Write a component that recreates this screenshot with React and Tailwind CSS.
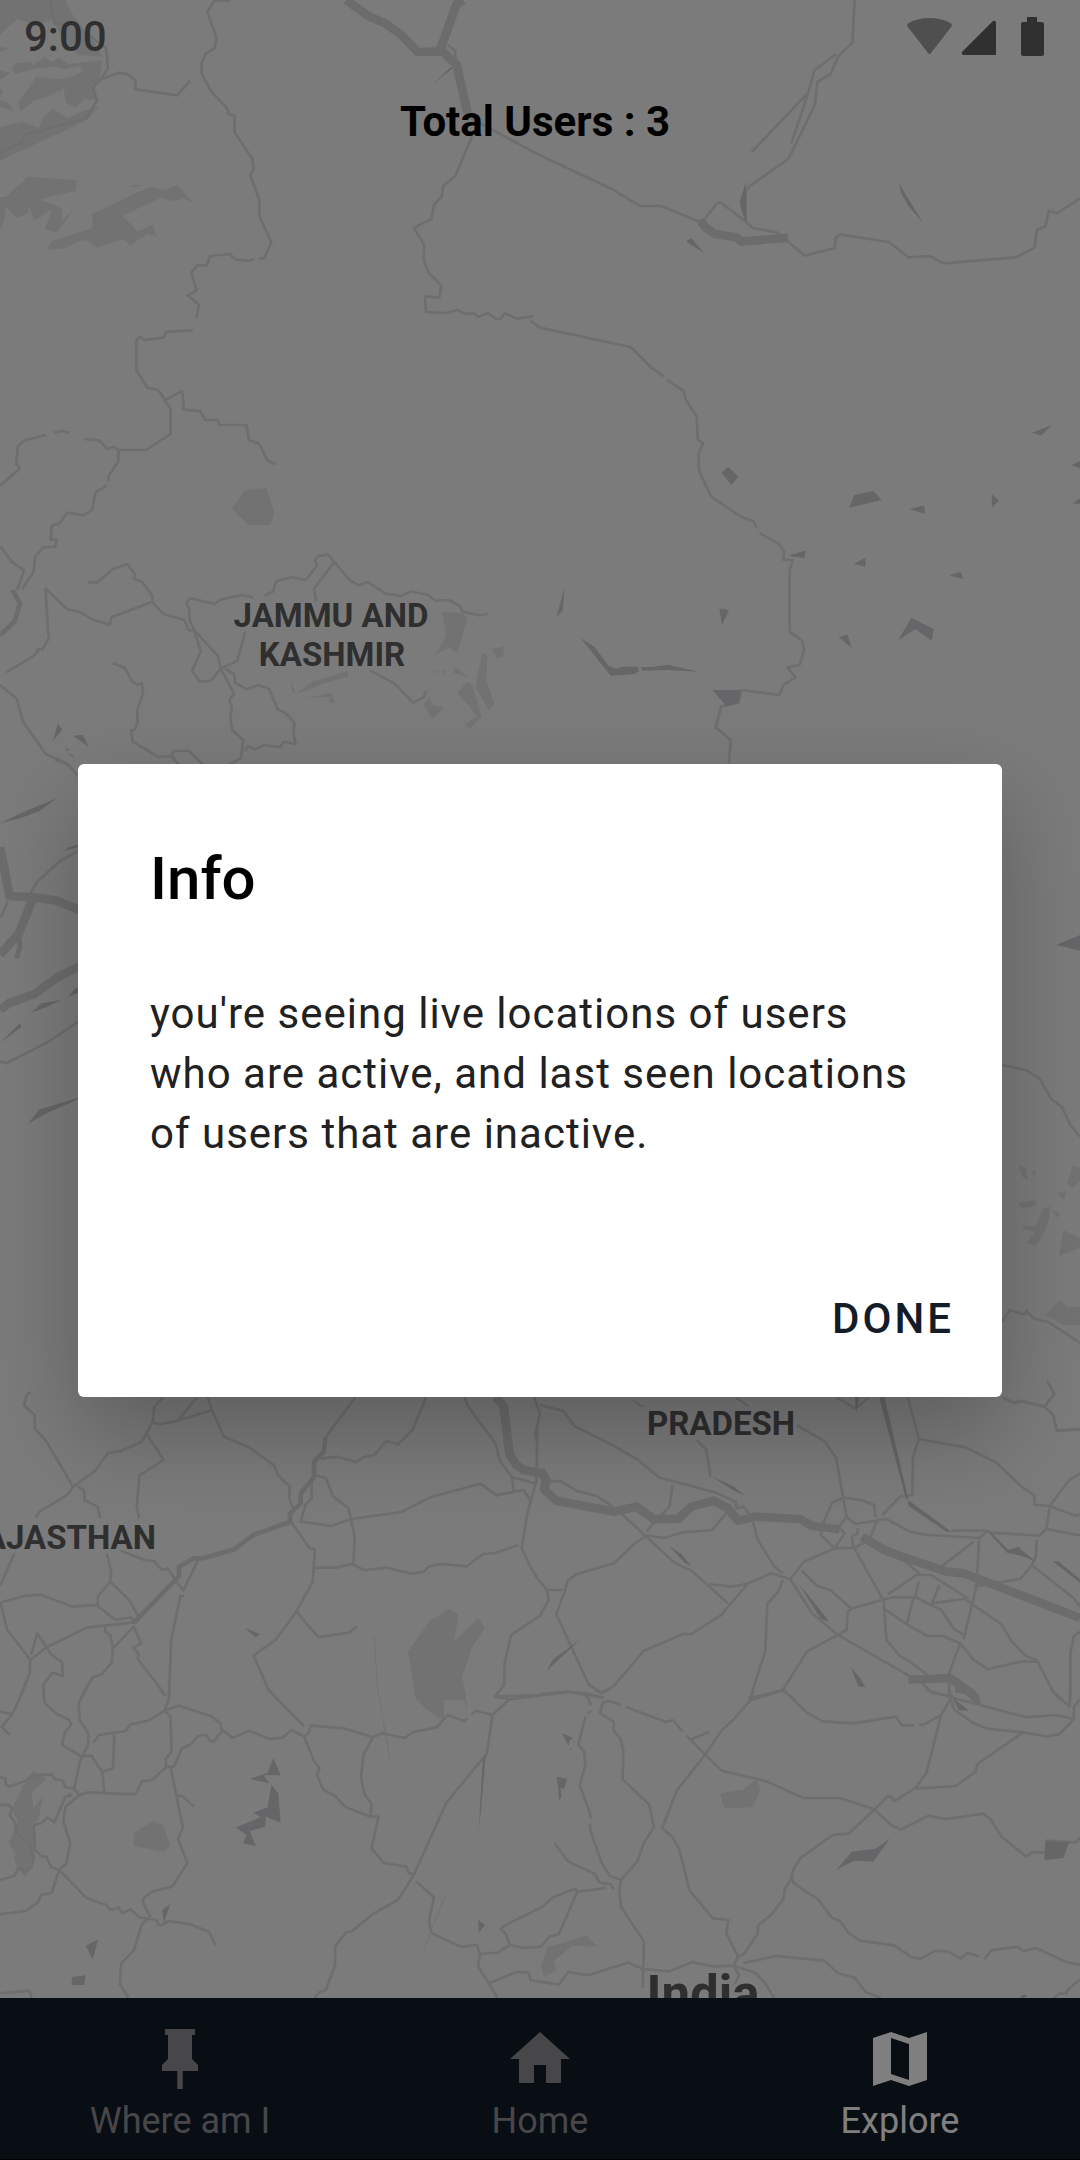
import React from "react";

/* Map artwork, split into sheets. Each sheet has its own origin. */
const sheets = [
  {
    at: [0, 0],
    land: [
      "M0 0H190L205 35L245 90L270 120L298 170L230 165L200 140L150 60L100 75L50 57L0 105Z",
      "M33 208L45 190L85 185L98 195L130 170L150 185L172 173L200 192L298 180L290 232L270 262L283 300L245 298L222 322L192 310L184 262L150 315L175 270L140 290L98 302L60 335L53 310L105 230L175 238L218 228L245 210L232 198L190 208L150 200L110 205L70 215L45 222Z",
      "M0 140L30 145L0 155Z M0 212L30 218L0 240Z M0 262L10 275L0 295Z M0 300L20 305L42 335L0 320Z",
      "M0 380L70 365L112 385L130 345L155 327L195 355L235 335L290 318L250 362L0 482Z",
      "M0 592L18 590L80 530L222 540L222 572L115 598L180 625L178 665L215 625L166 698L130 688L152 628L98 662L85 615L82 640L50 655L18 620L12 665L0 690Z",
      "M268 642L435 560L475 570L515 556L562 610L535 596L498 604L470 592L355 648L400 694L443 675L456 712L430 702L378 736L358 718L283 742L248 720L218 728L190 745L136 750L150 724L268 684Z",
      "M376 562L390 553L416 557Z",
    ],
    dark: ["M1205 303L1310 200L1316 204L1250 258Z"],
    thick: ["M1005 0L1070 48L1118 70L1165 104L1213 156L1285 154L1326 195L1358 340M1278 150L1325 14L1345 0"],
    thin: [
      "M147 0L158 70L210 72M262 108L308 145L314 205L292 238L270 262L282 302L272 318L250 355L68 406L66 425L0 460M292 238L345 218L370 222L393 240V268L515 286L552 243",
      "M670 2H622L602 36L629 115L623 145L598 160L585 190V220L612 272L660 326L664 342L681 347V397L733 477L736 508L727 525L753 600V648L788 727L767 775H752M740 776L722 782L684 779L667 762L610 768L600 796H573L555 818L571 871L545 886L577 914L571 956M560 991L484 995L474 1013L418 1020L407 1010L396 1020V1110L428 1164L458 1169L480 1200L529 1173L532 1200",
      "M1300 135L1322 153V190M1358 350L1568 466M1376 395L1322 528L1287 557L1282 590L1260 615L1253 656L1202 684L1232 735L1230 780L1244 818L1281 856L1276 892L1234 889L1237 936L1298 939L1328 930L1350 942L1378 940L1388 951L1416 939L1440 957H1453L1466 940L1502 956L1548 949M1540 962L1568 983",
    ],
  },
  {
    at: [540, 0],
    land: [],
    dark: [
      "M1042 548L1054 570L1112 668L1070 618L1048 578Z",
      "M424 724L440 714L476 760Z",
      "M598 545V665L588 640L580 605Z",
    ],
    thick: ["M466 662L480 682L508 702L570 712L585 725L720 714"],
    thin: [
      "M914 0L907 128L865 170L844 222L805 246L798 315L722 476L607 560L597 577V665L524 607L512 612L478 658L460 664L352 618H290L210 568L0 466M597 665L618 684L690 698L768 767L856 744L859 712L872 704L1013 726L1070 772L1132 768L1172 790L1382 772L1436 743L1443 690L1468 679L1477 632L1502 640L1568 595",
      "M860 162L797 210L779 277L614 457M779 277L730 430M0 983L263 1041L324 1104L360 1130M370 1140L418 1174L423 1200",
    ],
  },
  {
    at: [0, 400],
    land: [
      "M673 325L712 270L773 264L797 338L785 375H722Z",
      "M1283 635L1345 640L1357 655L1328 760L1306 742L1262 765L1296 708Z",
      "M1400 758L1416 768L1412 840L1435 910L1420 932L1380 862Z",
      "M1328 880L1356 845L1372 855L1398 950L1365 985L1350 975L1386 948Z",
      "M1230 915L1245 893L1260 918L1292 920L1256 956Z",
      "M1427 748L1462 738V770L1442 775Z",
      "M862 880L905 845L1010 812V830L935 852L895 870Z M885 895L962 878L972 910L955 908L960 890Z M842 835L858 880L850 878Z",
      "M1318 800L1362 830L1316 818Z M1285 812L1298 810L1290 825Z M1262 815L1274 810L1272 822Z",
    ],
    dark: [
      "M168 970L180 990L154 1022Z",
      "M212 1007L240 1004L257 1040Z",
      "M190 1042L202 1052L194 1052Z M192 1060L210 1064L217 1074Z",
    ],
    thick: [],
    thin: [
      "M476 0L495 24V102L425 150H345L331 140L312 147L288 121L243 117M134 105L72 121L52 138L47 190L57 206L0 257M155 98L180 93L203 98M345 150L343 185L315 228V245M310 256L277 278L268 330L243 346L195 338L173 370L150 377L147 418L166 420L160 440L125 442L102 470L98 515L64 568",
      "M532 0V28L582 34L596 60H632L636 75H716L722 120L753 132L777 182L802 193",
      "M0 437L34 485L70 511L50 570M254 547H284L328 507L370 493L393 524L388 536L412 545L443 588V605L324 652L319 674L268 659L232 636L194 627L132 565L140 700L143 712L123 750L112 747L100 767L18 817",
      "M443 608L475 642L535 660L548 691H564L551 660L549 625L541 610L552 594L622 612L640 599L703 585L735 592M768 588L793 574L802 543L849 532L887 540L920 498L915 480L924 468L954 464L970 487L912 566L918 605M970 485L1018 543L1043 556L1067 546L1120 581L1165 588L1192 574L1243 585L1264 602L1303 600L1335 618L1343 635L1390 646L1416 642",
      "M564 691L583 754L558 812L580 845L613 842L641 806L689 782L712 695M562 688L632 767L641 806L680 882L666 900L673 925L669 955L674 990L706 1020L700 1074L665 1095M655 806L680 824L683 848L716 868L750 855L781 866L806 928L828 938L855 969L852 1000L858 1032L825 1025L813 1041L765 1036L740 1048L720 1038L712 1053",
      "M328 790L362 803L383 843L399 855L411 850L416 875L398 933L400 968L390 990L380 992L385 1025L459 1071L498 1068L520 1095M498 1065L505 1053H549L588 1092M0 855L49 897L67 965L133 1062L194 1090L212 1110",
      "M1075 812L1145 850L1200 908L1230 892L1238 873",
    ],
    medium: ["M36 570L58 610L42 665L0 706"],
  },
  {
    at: [540, 400],
    land: [],
    dark: [
      "M527 218L547 200L576 230L556 255Z",
      "M898 323L912 285L968 273L992 300Z",
      "M1072 328L1115 316L1119 341Z",
      "M1312 281L1332 302L1312 323Z",
      "M1428 98L1488 74L1456 106Z",
      "M1543 195L1568 184V205Z M1547 310L1568 295V312Z",
      "M720 467L772 451L767 475Z",
      "M911 492L945 473V500Z",
      "M1188 526L1221 515L1230 538Z",
      "M1040 721L1078 653L1144 688L1137 723L1090 687Z",
      "M867 711L893 704L905 743Z",
      "M521 625L549 631L528 676Z",
      "M71 560L66 632L48 650Z",
      "M118 714L158 740L200 798L222 806L238 800H284L287 814L275 822L205 827Z",
      "M292 802L330 800L372 794L460 815L370 810L296 812Z",
      "M500 870H583L578 908L541 918Z",
    ],
    thick: [],
    thin: [
      "M423 0L455 48L458 118L474 130L461 160V207L472 235L497 290L585 351L620 364L630 384M637 399L694 432L709 455L706 480H734L725 511V695L761 722L767 749L754 794L718 802L742 833L706 855L696 885L585 870L576 908L526 920L510 982L554 1020L548 1095",
    ],
  },
  {
    at: [0, 760],
    land: [],
    dark: [
      "M0 190L75 153L165 115L115 153L60 175Z",
      "M188 272L200 262L226 254V262Z",
      "M90 758L120 730L178 720L130 743Z",
      "M196 712L220 683H228V698Z",
      "M0 848L60 788L62 802Z",
      "M80 1092L115 1048L226 1014V1018L132 1062Z",
    ],
    thick: [
      "M0 262L28 408L98 412L165 422L230 450M93 420L55 520L0 584M0 750L25 730L100 702L170 650L230 620",
    ],
    medium: ["M55 520L58 560L48 595"],
    thin: [
      "M160 0L196 12L228 50M228 272L172 305L108 365L88 400M22 425L6 465L0 472M0 905L18 910L140 846L228 784",
    ],
  },
  {
    at: [540, 1220],
    land: [
      "M1402 15L1436 22L1446 0H1476L1462 45L1436 80L1412 68L1438 35L1404 28Z",
      "M1520 30L1568 55V85L1506 108Z",
      "M1468 285L1510 240L1530 260H1568V315H1520Z",
    ],
    dark: [],
    thick: [],
    thin: [
      "M1342 305L1364 270L1408 284L1412 272L1434 296L1476 306L1568 369M1342 532L1378 549L1390 542L1465 560L1493 522L1472 482M1465 560L1490 585L1500 632L1568 628",
    ],
  },
  {
    at: [0, 1390],
    land: [
      "M1184 785L1250 690L1305 658L1332 675L1318 757L1388 684L1408 713L1370 775L1342 860L1354 930H1288L1287 905L1330 930H1208Z",
    ],
    dark: ["M710 713L755 733L742 742Z"],
    thick: ["M1440 20L1462 50L1480 195L1500 225L1520 240L1568 248"],
    medium: [
      "M945 142L940 185L912 215V262L873 310V340L842 370V396L735 435L680 478L590 505H562L520 530V558L390 697",
    ],
    thin: [
      "M88 5L76 18L70 47L101 75V115L135 155L212 290L196 315L112 367L104 384M212 290L275 243L315 188L350 183L410 157L425 130L475 210L405 256L397 350L404 385M425 130L444 95L448 50L475 20M444 98L465 103L516 92L572 22M516 92L616 60M603 20L616 62L650 140L720 170L797 227L807 256L842 290L839 320L850 355M225 288L245 303V330L284 350L291 385",
      "M1033 20L945 142M930 206L980 200L1034 216L1058 201L1087 195L1122 153L1156 163L1198 120L1237 22M915 255L946 265L968 320L1012 355L1030 440L1026 520L978 533H910M905 265V325L887 345L873 395L962 408L1020 387L1165 366L1250 322L1395 281L1442 316L1495 305M1020 520L1056 540L1123 533L1195 551L1230 546L1245 530L1280 522L1356 529L1402 492L1437 489L1506 465",
      "M845 396L898 473L914 478L908 576L860 665L800 750L736 796L780 900L808 930M860 665L925 742L1012 728L1036 710M1348 22L1360 50L1438 160L1453 215L1487 262L1492 305L1520 300L1540 330M1487 262L1554 280M1560 110L1558 270L1530 375L1515 475L1545 540L1568 577M1550 20L1568 70L1553 135L1562 160",
      "M42 490L0 588M0 638L70 618L120 614L210 650L280 645L335 690L380 682L390 697L255 712L135 772L88 810L20 718L2 640M310 490L323 545L320 575L285 618L283 645M320 575L375 630L402 680M350 482L420 510L446 513L470 540L486 535L532 602L575 510M535 618H524L497 750L490 930M88 810L86 850L55 930M90 795L108 730L150 795L180 816L183 858L152 848L125 885L128 930M305 703V724L320 735L328 775L325 817L295 853L268 862L232 930M328 775L388 710L410 760L386 773L402 790L400 807L480 915",
      "M1568 678L1484 735L1465 820L1464 885L1438 920L1568 915",
    ],
  },
  {
    at: [540, 1390],
    land: [],
    dark: [
      "M985 22H1000L1070 330L1062 325Z",
      "M1068 332L1076 335L1194 425H1180L1070 348Z",
      "M914 22H928L918 68Z",
      "M372 465L410 492L440 528L420 518Z",
      "M20 842L36 810L120 745Z",
      "M750 580L790 630L840 695L815 686Z",
      "M902 832L930 865L945 890H925Z",
      "M1296 420L1312 430L1360 480L1388 470L1440 516L1400 498L1356 488Z",
      "M1490 515L1504 513L1568 568V578Z",
      "M500 260L560 288L600 320L560 300Z M255 22L305 52L290 48Z",
    ],
    thick: [
      "M0 240L18 270L12 298L48 332L215 365L280 350L330 387H400L440 350L505 332L545 355L575 392L625 380L755 387L790 408L870 418M935 440L1000 480L1050 500L1180 545L1230 550L1568 684M1070 868L1130 867L1190 864L1250 908L1270 930",
    ],
    thin: [
      "M0 45L66 62L100 108L210 165L285 210L345 262L510 308L568 335L570 355L590 350L615 380M385 285L376 350L330 398M30 273L60 274L110 304L165 318L225 360L390 518L440 542L545 640M568 22L605 48M455 150L483 180L495 260M745 105L828 155L860 205L890 380L915 402L1005 387L1075 425L1120 434L1275 444L1300 422H1195",
      "M860 22L915 55L935 40L955 22M1068 22L1100 147L1083 200L1081 315L1045 320L994 375M1100 147L1237 172L1325 218L1398 290L1435 315L1436 344L1480 348L1555 377L1568 375M1568 250L1535 272L1480 348L1470 417L1568 436M1470 417L1450 437L1305 428M1342 22L1378 39L1400 33L1465 50L1493 12L1485 0M1465 50L1490 75L1500 121L1568 118",
      "M975 382L970 345L940 332L882 323L848 338L820 405L815 435L855 475L885 430L868 412L890 380M855 475L910 473L905 440L922 430V415M978 395L955 450L912 474L998 633L1006 750L1045 798L1075 815L1125 855M855 475L765 516L727 568L672 550L600 582L555 590L490 582M727 568L790 670L865 735L1110 880L1140 910L1200 918M618 395L633 450L680 530L706 550M540 370L500 420L415 427L360 444L310 436L280 456L215 520L105 553L80 573L70 610L47 672L142 885L178 908L213 890L300 783L415 732H440L525 676L600 585M310 425L330 398",
      "M705 570L692 605L660 642L654 785L608 930M760 542L805 588L842 600L905 656L998 628L1030 622H1090L1165 660L1200 715L1230 735M905 656L893 665L890 720L775 785L705 900L610 925M705 900L740 930M998 655L1065 703L1125 738H1170L1220 760L1258 808L1300 838L1395 815H1445L1490 905L1510 930M1045 500L1100 550L1010 613M1100 555H1135L1242 625L1138 640L1160 585M1085 620L1065 703M1100 575L1090 620M1165 530L1260 455M1275 450L1267 590L1230 748M1230 625L1340 703L1370 755L1410 797L1445 812M1260 590L1395 567L1428 525L1440 500L1442 450M1428 525L1550 625L1568 650M1568 725L1550 738L1540 790V930M1220 760L1188 850V915M0 575L20 600H65M20 600L25 630L0 678M0 912L80 905L185 923M132 910L140 930",
    ],
  },
  {
    at: [0, 1690],
    land: [
      "M1200 0H1288L1290 90L1275 85L1240 60L1208 25Z M1288 8L1318 22L1350 0L1358 62L1345 22L1312 18Z",
      "M388 430L443 392L473 406L495 467L478 486L388 468Z",
      "M80 262L98 243L135 266L92 308L97 355L125 318L112 390L97 400V500L75 560L52 540L36 490L50 500L26 460L44 410L52 392L32 360Z",
    ],
    dark: [
      "M794 203L815 256L765 256L783 280L725 267L777 248Z",
      "M788 285L808 310L815 398L772 380L770 410L725 424L743 468L706 460L716 436L685 412L757 382L736 368L777 352Z",
      "M1402 205L1410 200L1396 370L1390 420Z",
      "M494 642L476 700L471 660Z",
      "M249 767L285 748L280 768L269 808Z",
      "M210 861L249 856L245 885H207Z",
      "M1389 690L1408 705L1390 729Z",
    ],
    thick: [],
    thin: [
      "M68 0L36 72L0 65M36 72L5 110L28 135M126 0L130 40L165 72L202 90L206 105L188 128L180 165L238 200L256 165V130L232 90L228 38L250 0M270 158L288 135L365 123L378 104L430 92L478 62L492 20L490 0M465 0L482 18M332 133L328 235L297 247M238 200L232 215L216 293M238 200L265 196L297 247L303 308M0 262L15 265L17 285L30 289L80 270L98 256L150 253L160 268L180 270L190 292L215 296L230 316L255 307L393 313L412 274L442 270L482 232V205L498 185L495 80L478 62L520 47L612 78L640 100L645 122L622 154H612L598 135L574 138L555 162L528 175L505 230H482",
      "M648 122L675 143L725 122L782 147L820 143L847 120L883 140L897 128L902 107L998 115L1083 142L1108 130L1175 144L1200 126L1268 112L1300 75L1348 94L1357 84M1368 74L1382 62L1430 75L1480 28L1436 20L1452 0M1480 28L1568 16M780 0L882 108M883 140L912 214L928 234L920 255L938 298L975 320L1004 352L1076 380L1079 342L1058 312L1048 262L1055 195L1083 142M1076 380H1099L1079 475L1114 519L1180 530L1187 550L1200 552M1430 75L1414 190L1296 338L1200 558L1156 629L1083 672L1022 724L1005 727L973 770V825L946 900L928 906L914 924M1208 574L1260 622L1245 695L1254 730L1338 770L1384 765L1394 792L1388 830L1420 880L1444 924M1394 792L1444 788L1480 765L1470 733L1454 718L1468 705L1568 654M1480 765L1522 774L1568 771M1420 880L1500 846L1535 847L1540 870L1568 876",
      "M0 345L25 344L35 355L28 375L42 395L48 430L85 460L98 500L92 530L75 547L55 530L42 558L0 570M98 405L120 400L137 382L158 397L190 320L207 318L200 308M98 405L102 480L122 500H135L148 530L172 540L193 520L204 460L184 395L190 350L230 316M172 540L150 608L120 615L110 637L75 663L0 672M172 540L250 623L310 646L320 660L345 653L355 670L378 658L405 682L455 690L460 705L472 705L490 693L550 702L606 725L627 766M437 682L414 635L418 624L440 605L500 590L544 519L517 448L531 412L496 235M513 317L530 318L563 350M430 688L413 700L388 782L352 820L348 882L373 924M0 910L85 902L92 924",
    ],
    hair: ["M1086 -160L1097 0L1132 205M1295 610L1250 725L1230 785"],
  },
  {
    at: [540, 1690],
    land: [
      "M522 310L592 298L628 268L641 298L618 352L535 355Z",
      "M22 772L135 737L168 770L93 768L38 815L48 840L12 860L2 830Z",
    ],
    dark: [
      "M64 130L95 143L84 155L83 168Z M86 172L91 178L88 181Z",
      "M48 260L79 266L70 298L60 293L62 320L56 333L53 295Z",
      "M860 540L905 485L975 476L1017 445L968 515L912 512Z",
      "M1468 455L1536 456L1520 504L1464 511Z",
      "M1198 25L1225 45L1245 62L1216 61Z",
      "M1398 915H1416L1408 924H1394Z",
    ],
    medium: ["M1205 0L1260 10L1275 42"],
    thick: [],
    thin: [
      "M0 16L85 6L135 10L185 23M160 0L178 8L200 0M135 10L148 46M148 62L138 72M132 80L122 120L111 165L128 184L132 225L115 285L145 368L147 385M145 402L147 425L180 520L202 557L236 570L283 514L301 460L331 412L317 344L240 268L242 180L233 145L214 122V95L174 70L182 38L200 33L235 44M248 50L366 96L386 90L414 124M425 137L527 242L655 273L765 324H870L968 356L1020 405L1048 419L1128 377L1178 387L1288 371L1310 390L1340 440L1412 500L1428 487H1465",
      "M620 0L610 32L560 90L527 122L475 200L397 302L355 414L385 442L405 480L434 601L502 685L547 690L541 730L575 800L592 793L631 733L634 706L674 672L708 624L711 596L730 565L740 582L808 629L848 684L870 692L895 728L928 752L1028 766L1080 802L1106 806L1148 782L1186 785L1220 806L1243 788L1275 800M1290 808L1310 781L1388 770L1403 783L1440 774L1530 817L1568 825M610 32L706 0L775 68L820 94L910 100L1034 80L1050 106H1088M1100 104L1115 103L1165 75L1190 30V0M1165 75L1122 248L1092 292L1030 333L1018 320H1008L975 355L898 430L850 435L755 505L735 540L730 565M1092 296L1208 288L1265 245L1270 222L1403 127L1298 116L1260 100L1204 60L1188 20L1120 0M1188 20L1412 82L1498 75L1550 87L1508 133L1470 139L1403 127M1485 0L1538 50V0M1550 87V50L1568 28M436 150L492 125",
      "M42 460L82 515L160 552L172 578L205 582L214 598M192 594L112 605L100 597L38 622L0 656M108 605L55 733L28 740L0 772M236 570L230 600L235 650L302 755L298 895M0 875L55 884L82 846L140 856L255 818L300 837L375 844L442 817L505 830L563 827L575 800M563 827L578 856L565 885M563 827L625 848L655 882L680 924M590 820L685 798L825 812L865 850L914 863L945 906L990 924M1568 868L1532 900L1528 912L1510 910L1492 924M1467 490L1472 452L1555 458L1568 442",
    ],
  },
  {
    at: [540, 760],
    land: [
      "M1390 1215L1412 1225L1418 1262L1400 1250Z M1425 1235L1440 1228L1436 1250Z",
      "M1548 1215L1568 1225V1262L1545 1285L1530 1270Z M1500 1300L1530 1290L1522 1320Z",
      "M1386 1330L1436 1320L1442 1338L1400 1345Z M1462 1345L1482 1340L1478 1380H1446Z",
      "M1490 1350L1510 1362L1498 1375Z",
    ],
    dark: ["M1498 555L1568 525V572L1540 565Z"],
    thick: [],
    thin: ["M1342 915L1410 930L1450 955L1485 1018L1515 1040L1540 1095L1568 1130"],
  },
];

function MapArt() {
  const labels = [
    { x: 331, y: 627, text: "JAMMU AND" },
    { x: 332, y: 666, text: "KASHMIR" },
    { x: 721, y: 1435, text: "PRADESH" },
  ];
  return (
    <svg
      aria-label="Map"
      role="img"
      viewBox="0 0 1080 1998"
      preserveAspectRatio="xMidYMid slice"
      className="absolute inset-0 h-full w-full bg-[#f7f7f7] font-['Roboto',sans-serif]"
    >
      {sheets.map((s) => (
        <g
          key={s.at.join("-")}
          transform={`translate(${s.at[0]} ${s.at[1]}) scale(0.3444 0.3333)`}
          fill="none"
          strokeLinejoin="round"
        >
          <path d={s.land.join("")} fill="#e4e4e4" />
          {s.hair && <path d={s.hair.join("")} stroke="#e4e4e4" strokeWidth="3" />}
          <g stroke="#dddddd" strokeWidth="8">
            {s.thin.map((d) => (
              <path key={d} d={d} />
            ))}
          </g>
          {s.medium && (
            <path d={s.medium.join("")} stroke="#dad9db" strokeWidth="14" />
          )}
          <path d={s.thick.join("")} stroke="#dad8db" strokeWidth="26" />
          <path d={s.dark.join("")} fill="#cdcbce" />
        </g>
      ))}
      <g
        fill="#5e5e5e"
        stroke="#f7f7f7"
        strokeWidth="6"
        paintOrder="stroke"
        fontWeight="700"
        fontSize="33"
        textAnchor="middle"
      >
        {labels.map((l) => (
          <text key={l.text} x={l.x} y={l.y}>
            {l.text}
          </text>
        ))}
        <text x="156" y="1549" textAnchor="end">
          RAJASTHAN
        </text>
        <text x="703" y="2012" fontSize="51">
          India
        </text>
      </g>
    </svg>
  );
}

function StatusBar() {
  return (
    <div className="flex h-[74px] items-center justify-between pr-9 pl-6 text-[#606060]">
      <span className="text-[42px] leading-[48px] font-medium">9:00</span>
      <svg width="138" height="40" viewBox="0 0 138 40" fill="currentColor" aria-hidden="true">
        <path
          fill="#9e9e9e"
          d="M1.5 9.500 Q0 8 2 6.500 Q11 1 23.500 1 Q36 1 45 6.500 Q47 8 45.500 9.500 L25 36 Q23.500 38 22 36 Z"
        />
        <path d="M87 4Q90 3 90 6V37Q90 38 89 38H57Q55 37 56 35Z" />
        <path d="M121 0H131V5H135Q138 5 138 7V37Q138 39 136 39H117Q115 39 115 37V7Q115 5 117 5H121Z" />
      </svg>
    </div>
  );
}

const tabs = [
  {
    label: "Where am I",
    active: false,
    icon: "M16,12V4H17V2H7V4H8V12L6,14V16H11.100V22H12.900V16H18V14L16,12Z",
  },
  { label: "Home", active: false, icon: "M10,20V14H14V20H19V12H22L12,3L2,12H5V20H10Z" },
  { label: "Explore", active: true, icon: "M3,5L9,3L15,5L21,3V19L15,21L9,19L3,21ZM9,5V17L15,19V7Z" },
];

function BottomNav() {
  return (
    <nav className="relative grid grid-cols-3 border-b border-black bg-[#131a28]">
      {tabs.map((t) => (
        <button
          key={t.label}
          type="button"
          className={
            t.active
              ? "flex flex-col items-center pt-[25px] pb-3 text-white"
              : "flex flex-col items-center pt-[25px] pb-3 text-[#8e8e92]"
          }
        >
          <svg
            className="size-[72px]"
            viewBox="0 0 24 24"
            fill="currentColor"
            fillRule="evenodd"
            aria-hidden="true"
          >
            <path d={t.icon} />
          </svg>
          <span className="text-[36px] leading-[52px]">{t.label}</span>
        </button>
      ))}
    </nav>
  );
}

export default function App() {
  return (
    <div className="relative flex min-h-screen flex-col overflow-hidden font-['Roboto',sans-serif]">
      <main className="relative flex-1 overflow-hidden">
        <MapArt />
        <div className="relative">
          <StatusBar />
          <h1 className="pt-6 pr-[10px] text-center text-[42px] leading-[48px] font-bold text-black">
            Total Users : 3
          </h1>
        </div>
      </main>
      <BottomNav />

      <div className="absolute inset-0 flex items-center bg-black/50 px-[78px]">
        <div
          role="dialog"
          aria-modal="true"
          aria-labelledby="info-title"
          className="w-full rounded-md bg-white shadow-[0_36px_90px_rgba(0,0,0,0.24)]"
        >
          <div className="px-[72px] pt-20">
            <h2 id="info-title" className="text-[60px] leading-[70px] font-medium text-black">
              Info
            </h2>
            <p className="mt-[70px] text-[42px] leading-[60px] tracking-[1px] text-[#212121]">
              you're seeing live locations of users who are active, and last seen locations of
              users that are inactive.
            </p>
          </div>
          <div className="flex justify-end pt-[101px] pr-6 pb-6">
            <button
              type="button"
              className="h-[108px] px-6 text-[42px] font-medium tracking-[3px] text-[#141c28]"
            >
              DONE
            </button>
          </div>
        </div>
      </div>
    </div>
  );
}
